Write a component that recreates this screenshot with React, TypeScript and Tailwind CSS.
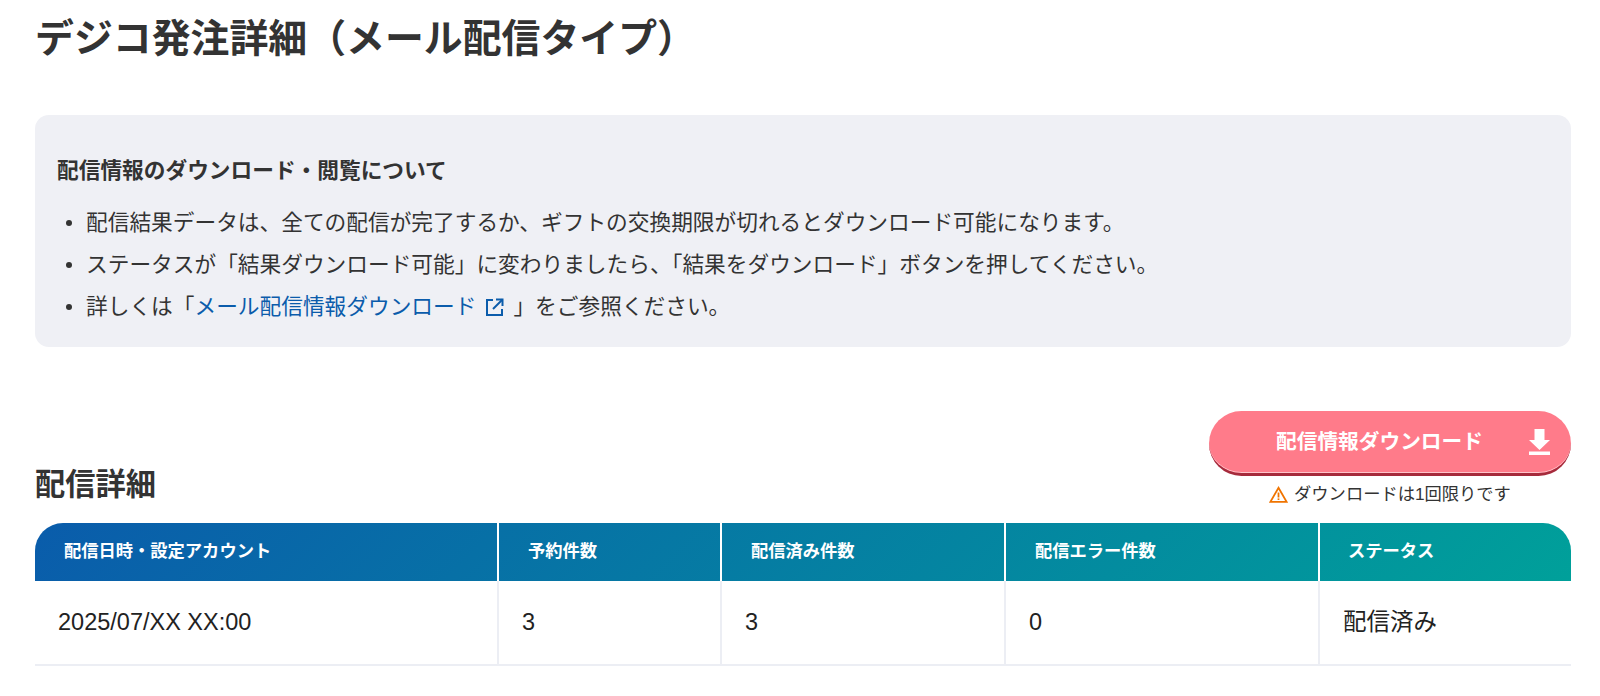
const font = "font-['Liberation_Sans','Noto_Sans_CJK_JP',sans-serif]";

const notes = [
  "配信結果データは、全ての配信が完了するか、ギフトの交換期限が切れるとダウンロード可能になります。",
  "ステータスが「結果ダウンロード可能」に変わりましたら、「結果をダウンロード」ボタンを押してください。",
];

const columns = [
  { label: "配信日時・設定アカウント", value: "2025/07/XX XX:00", width: "w-[463px]", head: "pl-[29px]" },
  { label: "予約件数", value: "3", width: "w-[223px]", head: "pl-[29px]" },
  { label: "配信済み件数", value: "3", width: "w-[284px]", head: "pl-[29px]" },
  { label: "配信エラー件数", value: "0", width: "w-[314px]", head: "pl-[29px]" },
  { label: "ステータス", value: "配信済み", width: "w-[252px]", head: "pl-[28px]" },
];

function ExternalIcon() {
  return (
    <svg viewBox="0 0 19 19" fill="none" stroke="currentColor" strokeWidth="2" className="mx-[9px] size-[19px]">
      <path d="M8 2H2v15h15v-6" />
      <path d="M11 1.5h6.5V8" />
      <path d="M17.5 1.5 8 11" />
    </svg>
  );
}

function DownloadIcon() {
  return (
    <svg viewBox="0 0 21 26" fill="currentColor" className="ml-[36px] h-[26px] w-[21px]">
      <path d="M5.5 0h10v11H21L10.5 21 0 11h5.5z" />
      <rect x="0" y="22.5" width="21" height="3.5" />
    </svg>
  );
}

function WarningIcon() {
  return (
    <svg viewBox="0 0 19 17" fill="none" stroke="#f07400" strokeWidth="1.8" className="mr-[6px] h-[17px] w-[19px]">
      <path d="M9.5 1.8 17.6 15.8H1.4z" />
      <path d="M9.5 6.5v5" />
      <path d="M9.5 12.4v1.6" />
    </svg>
  );
}

function Bullet() {
  return <span className="mr-[14px] ml-[9px] size-[6px] shrink-0 rounded-full bg-[#333]" />;
}

export default function App() {
  return (
    <div className={`${font} h-[696px] overflow-hidden bg-white pl-[35px] pr-[29px] text-[#333]`}>
      <h1 className="pt-[12px] text-[38.88px] leading-[54px] font-bold">デジコ発注詳細（メール配信タイプ）</h1>

      <section className="mt-[49px] h-[232px] rounded-[14px] bg-[#eff0f5] pl-[22px] pt-[41px]">
        <p className="text-[21.7px] leading-[30px] font-bold">配信情報のダウンロード・閲覧について</p>
        <ul className="mt-[16px] text-[21.7px] leading-[42px]">
          {notes.map((note) => (
            <li key={note} className="flex items-center">
              <Bullet />
              {note}
            </li>
          ))}
          <li className="flex items-center">
            <Bullet />
            詳しくは「
            <a className="flex items-center text-[#0b5cab]">
              メール配信情報ダウンロード
              <ExternalIcon />
            </a>
            」をご参照ください。
          </li>
        </ul>
      </section>

      <div className="mt-[64px] flex items-start justify-between">
        <h2 className="mt-[53px] text-[30.24px] leading-[42px] font-bold">配信詳細</h2>
        <div className="flex w-[362px] flex-col items-center">
          <button className="flex h-[65px] w-full items-center rounded-full border-b-[3px] border-[#a62b3c] bg-[#ff7b8a] pl-[67px] text-[20.7px] font-bold text-white shadow-[inset_0_-1px_0_#ffc4cb]">
            <span className="w-[217px] text-left">配信情報ダウンロード</span>
            <DownloadIcon />
          </button>
          <p className="mt-[6px] flex items-center text-[17.28px] leading-[24px]">
            <WarningIcon />
            ダウンロードは1回限りです
          </p>
        </div>
      </div>

      <table className="mt-[17px] w-[1536px] table-fixed border-collapse">
        <thead>
          <tr className="h-[58px] bg-[linear-gradient(135deg,#0a5cab,#00a09a)] text-[17.28px] text-white">
            {columns.map((col, i) => (
              <th
                key={col.label}
                className={`${col.width} ${col.head} text-left font-bold ${i < columns.length - 1 ? "border-r-2 border-white" : ""} ${i === 0 ? "rounded-tl-[28px]" : ""} ${i === columns.length - 1 ? "rounded-tr-[28px]" : ""}`}
              >
                {col.label}
              </th>
            ))}
          </tr>
        </thead>
        <tbody>
          <tr className="h-[84px] border-b-2 border-[#eceef4] text-[23.5px] text-[#222]">
            {columns.map((col, i) => (
              <td key={col.label} className={`pl-[23px] ${i < columns.length - 1 ? "border-r-2 border-[#eceef4]" : ""}`}>
                {col.value}
              </td>
            ))}
          </tr>
        </tbody>
      </table>
    </div>
  );
}
